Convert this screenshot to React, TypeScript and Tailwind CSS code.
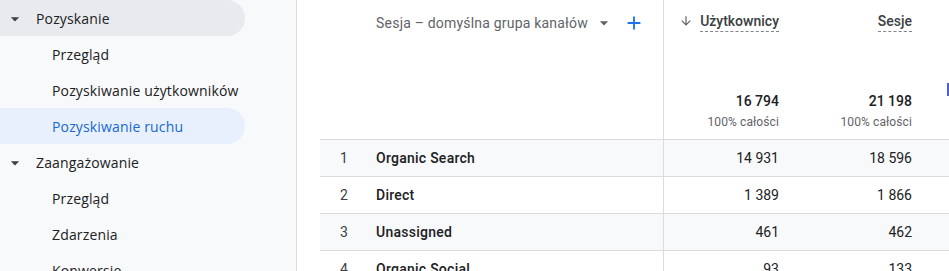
import React from "react";

const Caret = ({ className = "" }: { className?: string }) => (
  <svg viewBox="0 0 24 24" className={className} fill="currentColor">
    <path d="M7 10l5 5 5-5z" />
  </svg>
);

type NavItem = { label: string; level: 0 | 1; active?: boolean; open?: boolean };

const nav: NavItem[] = [
  { label: "Pozyskanie", level: 0, open: true },
  { label: "Przegląd", level: 1 },
  { label: "Pozyskiwanie użytkowników", level: 1 },
  { label: "Pozyskiwanie ruchu", level: 1, active: true },
  { label: "Zaangażowanie", level: 0 },
  { label: "Przegląd", level: 1 },
  { label: "Zdarzenia", level: 1 },
  { label: "Konwersje", level: 1 },
];

const rows = [
  { n: 1, name: "Organic Search", u: "14 931", s: "18 596" },
  { n: 2, name: "Direct", u: "1 389", s: "1 866" },
  { n: 3, name: "Unassigned", u: "461", s: "462" },
  { n: 4, name: "Organic Social", u: "93", s: "133" },
];

const medium = "font-['Roboto_Medium','Roboto',sans-serif] font-normal";

export default function App() {
  return (
    <div className="flex w-[949px] h-[271px] overflow-hidden bg-white font-['Roboto',sans-serif]">
      <aside className="w-[297px] shrink-0 bg-[#f8f9fa] border-r border-[#dadce0] overflow-hidden">
        {nav.map((it, i) => (
          <div
            key={i}
            className={
              "h-[36px] w-[245px] flex items-center rounded-r-full text-[14px] tracking-[0.15px] pt-[1px] font-['Open_Sans',sans-serif] " +
              (it.open
                ? "bg-[#e8eaed] text-[#202124]"
                : it.active
                ? "bg-[#e8f0fe] text-[#1967d2]"
                : "text-[#202124]")
            }
          >
            {it.level === 0 ? (
              <>
                <Caret className="w-[20px] h-[20px] ml-[5px] mr-[11px] text-[#3c4043]" />
                <span>{it.label}</span>
              </>
            ) : (
              <span className="pl-[52px]">{it.label}</span>
            )}
          </div>
        ))}
      </aside>

      <main className="flex-1 overflow-hidden pl-[23px] text-[14px] text-[#202124]">
        <div className="w-[700px]">
          {/* header */}
          <div className="flex h-[140px] border-b border-[#dadce0]">
            <div className="w-[343px] shrink-0 flex items-start justify-end pr-[18px] pt-[12px] text-[#5f6368]">
              <span className="leading-[22px] tracking-[0.2px]">Sesja – domyślna grupa kanałów</span>
              <Caret className="w-[20px] h-[20px] ml-[6px] mt-[1px] text-[#5f6368]" />
              <svg viewBox="0 0 24 24" className="w-[22px] h-[22px] ml-[9px] text-[#1a73e8]" fill="currentColor">
                <path d="M19 13h-6v6h-2v-6H5v-2h6V5h2v6h6v2z" />
              </svg>
            </div>
            <div className="w-[132px] shrink-0 border-l border-[#dadce0] flex flex-col items-end pr-[16px]">
              <div className="flex items-center mt-[10px] h-[22px]">
                <svg viewBox="0 0 24 24" className="w-[14px] h-[14px] mr-[7px] text-[#5f6368]" fill="currentColor">
                  <path d="M20 12l-1.41-1.41L13 16.17V4h-2v12.17l-5.58-5.59L4 12l8 8 8-8z" />
                </svg>
                <span className={medium + " text-[#3c4043] border-b border-dashed border-[#80868b] leading-[20px]"}>Użytkownicy</span>
              </div>
              <div className={medium + " mt-[60px] text-[14px] leading-[18px] text-[#202124]"}>16 794</div>
              <div className="mt-[4px] text-[12px] leading-[16px] text-[#5f6368] tracking-[0.1px]">100% całości</div>
            </div>
            <div className="w-[133px] shrink-0 flex flex-col items-end pr-[16px]">
              <div className="flex items-center mt-[10px] h-[22px]">
                <span className={medium + " text-[#3c4043] border-b border-dashed border-[#80868b] leading-[20px]"}>Sesje</span>
              </div>
              <div className={medium + " mt-[60px] text-[14px] leading-[18px] text-[#202124]"}>21 198</div>
              <div className="mt-[4px] text-[12px] leading-[16px] text-[#5f6368] tracking-[0.1px]">100% całości</div>
            </div>
            <div className="flex-1 relative">
              <div className="absolute left-[19px] top-[83px] w-[2px] h-[13px] bg-[#4c5fd5]" />
            </div>
          </div>
          {/* rows */}
          {rows.map((r, i) => (
            <div
              key={r.n}
              className={
                "flex h-[37px] border-b border-[#dadce0] " + (i % 2 === 0 ? "bg-[#f8f9fa]" : "bg-white")
              }
            >
              <div className="w-[48px] shrink-0 flex items-center justify-center text-[#3c4043]">{r.n}</div>
              <div className={medium + " w-[295px] shrink-0 flex items-center pl-[8px] tracking-[0.25px] text-[#202124]"}>{r.name}</div>
              <div className="w-[132px] shrink-0 border-l border-[#dadce0] flex items-center justify-end pr-[16px] text-[#202124]">
                {r.u}
              </div>
              <div className="w-[133px] shrink-0 flex items-center justify-end pr-[16px] text-[#202124]">{r.s}</div>
              <div className="flex-1" />
            </div>
          ))}
        </div>
      </main>
    </div>
  );
}
